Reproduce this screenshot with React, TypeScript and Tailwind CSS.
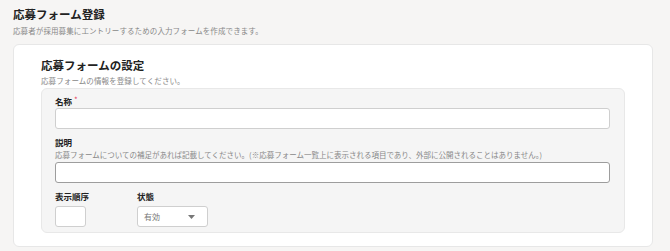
const font = { fontFamily: '"Noto Sans CJK JP", "Noto Sans", sans-serif' }

export default function App() {
  return (
    <div
      className="w-[670px] h-[251px] bg-[#f6f5f4] px-[13px] pt-[6px] text-[#222]"
      style={font}
    >
      {/* Page header */}
      <h1 className="text-[11.5px] font-bold leading-[16px]">応募フォーム登録</h1>
      <p className="mt-[4px] text-[7.5px] leading-[10px] tracking-[0.1px] text-[#888]">
        応募者が採用募集にエントリーするための入力フォームを作成できます。
      </p>

      {/* Card */}
      <div className="mt-[8px] w-[640px] rounded-[6px] border border-[#e7e7e7] bg-white px-[27px] pt-[12px] pb-[13px]">
        <h2 className="text-[11.5px] font-bold leading-[16px]">応募フォームの設定</h2>
        <p className="mt-[3px] text-[7.5px] leading-[10px] tracking-[0.1px] text-[#888]">
          応募フォームの情報を登録してください。
        </p>

        {/* Fields panel */}
        <div className="mt-[2px] rounded-[6px] border border-[#e8e8e8] bg-[#f5f5f5] pl-[13px] pr-[14px] pt-[6px] pb-[5px]">
          <label className="flex items-start text-[8.5px] font-bold leading-[12px]">
            名称<span className="ml-[2px] mt-[1px] text-[8px] font-normal leading-[8px] text-[#e8465e]">*</span>
          </label>
          <input className="mt-[1px] block h-[21px] w-full rounded-[3px] border border-[#cfcfcf] bg-white" />

          <label className="mt-[7px] block text-[8.5px] font-bold leading-[12px]">説明</label>
          <p className="mt-[2px] text-[7.5px] leading-[10px] text-[#888]">
            応募フォームについての補足があれば記載してください。(※応募フォーム一覧上に表示される項目であり、外部に公開されることはありません。)
          </p>
          <input className="mt-[2px] block h-[21px] w-full rounded-[3px] border border-[#9d9d9d] bg-white" />

          <div className="mt-[7px] flex">
            <div className="w-[82px]">
              <label className="block text-[8.5px] font-bold leading-[12px]">表示順序</label>
              <input className="mt-[4px] block h-[21px] w-[31px] rounded-[3px] border border-[#cfcfcf] bg-white" />
            </div>
            <div>
              <label className="block text-[8.5px] font-bold leading-[12px]">状態</label>
              <div className="mt-[4px] flex h-[21px] w-[71px] items-center rounded-[3px] border border-[#cfcfcf] bg-white pl-[6px] pr-[12px]">
                <span className="flex-1 text-[8px] leading-[10px] text-[#777]">有効</span>
                <svg width="7" height="4" viewBox="0 0 7 4">
                  <path d="M0 0h7L3.5 4z" fill="#777" />
                </svg>
              </div>
            </div>
          </div>
        </div>
      </div>
    </div>
  )
}
